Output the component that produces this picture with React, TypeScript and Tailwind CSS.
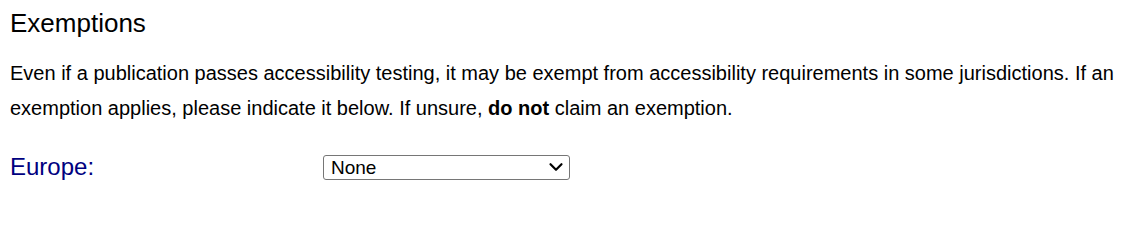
import { ChevronDown } from "lucide-react";

export default function App() {
  return (
    <div className="bg-white px-[10px] pt-[8px] font-['Liberation_Sans',Arial,sans-serif] text-black">
      <h2 className="m-0 text-[26px] leading-[30px]">Exemptions</h2>
      <p className="mt-[18px] text-[20px] leading-[35px]">
        Even if a publication passes accessibility testing, it may be exempt from accessibility
        requirements in some jurisdictions. If an exemption applies, please indicate it below. If
        unsure, <strong className="font-bold">do not</strong> claim an exemption.
      </p>
      <div className="mt-[26px] flex items-center">
        <label htmlFor="europe" className="w-[313px] text-[24px] leading-[30px] text-[#000080]">
          Europe:
        </label>
        <div className="relative">
          <select
            id="europe"
            defaultValue="none"
            className="block h-[25px] w-[247px] appearance-none rounded-[3px] border border-[#767676] bg-white pl-[7px] pr-[24px] text-[19px] leading-[23px] text-black"
          >
            <option value="none">None</option>
            <option value="microenterprise">Microenterprise</option>
            <option value="burden">Disproportionate burden</option>
            <option value="archived">Archived content</option>
          </select>
          <ChevronDown
            size={22}
            strokeWidth={2.4}
            aria-hidden="true"
            className="pointer-events-none absolute right-[3px] top-[1px] text-black"
          />
        </div>
      </div>
    </div>
  );
}
